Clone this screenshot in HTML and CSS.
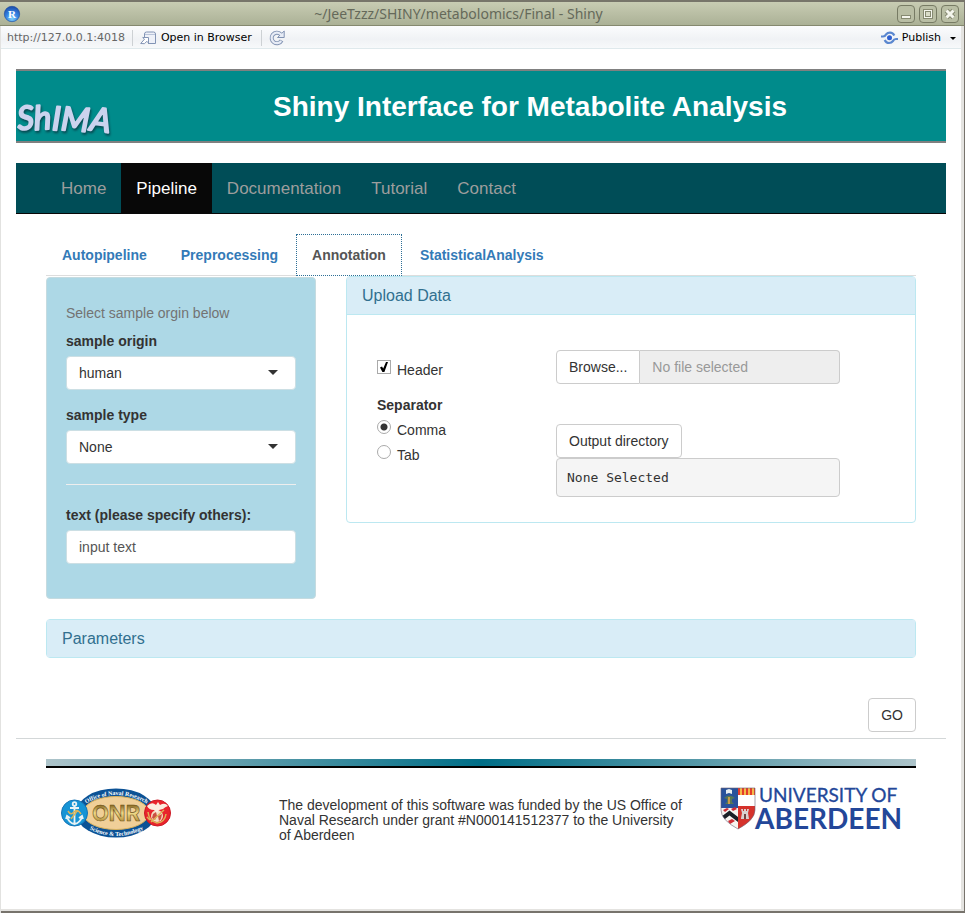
FILE: index.html
```html
<!DOCTYPE html>
<html lang="en">
<head>
<meta charset="utf-8">
<title>~/JeeTzzz/SHINY/metabolomics/Final - Shiny</title>
<link rel="stylesheet" href="styles.css">
</head>
<body>
<div class="window">
  <header class="titlebar">
    <svg class="r-logo" viewBox="0 0 16 16" aria-hidden="true">
      <defs><radialGradient id="ball" cx=".5" cy=".8" r=".8"><stop offset="0" stop-color="#7fd0fa"/><stop offset=".5" stop-color="#3583e2"/><stop offset="1" stop-color="#1c4ba8"/></radialGradient></defs>
      <circle cx="8" cy="8" r="7.7" fill="url(#ball)" stroke="#17489c" stroke-width=".6"/>
      <text x="8" y="12" text-anchor="middle" class="r-letter">R</text>
    </svg>
    <h1 class="window-title">~/JeeTzzz/SHINY/metabolomics/Final - Shiny</h1>
    <div class="window-buttons">
      <button type="button" aria-label="Minimize"><svg viewBox="0 0 16 16"><path class="edge" d="M3 9h10v4H3z"/><path d="M4 10h8v2H4z"/></svg></button>
      <button type="button" aria-label="Maximize"><svg viewBox="0 0 16 16"><path class="edge" d="M3 3h10v10H3z"/><path d="M4 4h8v8H4z"/><path class="edge" d="M5 5h6v6H5z"/><path class="core" d="M6 6h4v4H6z"/></svg></button>
      <button type="button" aria-label="Close"><svg viewBox="0 0 16 16" fill="none"><path class="cross-edge" d="M4.500 4.500l7 7M11.500 4.500l-7 7"/><path class="cross" d="M4.500 4.500l7 7M11.500 4.500l-7 7"/></svg></button>
    </div>
  </header>
  <div class="toolbar">
    <span class="url">http://127.0.0.1:4018</span>
    <button type="button" class="tool tool-open">
      <svg width="17" height="14" viewBox="0 0 17 14" fill="none" stroke="#8294b5"><path d="M4.500 6V3Q4.500 1 6.500 1H13.500Q15.500 1 15.500 3V12.500H8" fill="#eef1f8"/><path d="M5 3.500H15" stroke="#b9c4da"/><path d="M.7 12.500L4.500 8.200 2.700 6.500H8.500V12L6.800 10.300 4.500 12.700Z" fill="#fff"/></svg>
      Open in Browser
    </button>
    <button type="button" class="tool tool-reload" aria-label="Reload">
      <svg width="16" height="16" viewBox="0 0 16 16" fill="none"><path d="M12.600 10.500A5.300 5.300 0 1 1 11.500 4" stroke="#8192b2" stroke-width="4"/><path d="M15.200 1V7.500H8.500Z" fill="#e7ecf6" stroke="#8192b2"/><path d="M12.200 11A5.300 5.300 0 1 1 11.500 4L12.500 5" stroke="#e7ecf6" stroke-width="2.200"/></svg>
    </button>
    <button type="button" class="tool tool-publish">
      <svg width="17" height="14" viewBox="0 0 17 14" fill="none" stroke="#5a87cf" stroke-width="2.200"><path d="M0 5.500H2Q4 5.500 5 3.500 6.500 1.600 9 1.600 12 1.600 13.300 4.500"/><path d="M17 8H15Q13 8 12 10 10.500 12 8 12 5 12 3.700 9"/><circle cx="8.500" cy="6.800" r="2.500" fill="#2e5fd0" stroke="none"/></svg>
      Publish <span class="caret caret-small"></span>
    </button>
  </div>

  <main class="page">
    <div class="banner">
      <svg class="shima" width="100" height="40" viewBox="0 0 100 40" role="img" aria-label="ShIMA">
        <text x="2" y="31" rotate="-4 -4 2 4 8">ShIMA</text>
      </svg>
      <h2>Shiny Interface for Metabolite Analysis</h2>
    </div>

    <nav class="navbar">
      <a href="#home">Home</a>
      <a href="#pipeline" class="active">Pipeline</a>
      <a href="#documentation">Documentation</a>
      <a href="#tutorial">Tutorial</a>
      <a href="#contact">Contact</a>
    </nav>

    <div class="content">
      <nav class="tabs">
        <a href="#autopipeline">Autopipeline</a>
        <a href="#preprocessing">Preprocessing</a>
        <a href="#annotation" class="active">Annotation</a>
        <a href="#statistical">StatisticalAnalysis</a>
      </nav>
      <div class="columns">
        <form class="well">
          <p class="help">Select sample orgin below</p>
          <label for="origin">sample origin</label>
          <div class="select-box"><select id="origin"><option>human</option></select><span class="caret"></span></div>
          <label for="type">sample type</label>
          <div class="select-box"><select id="type"><option>None</option></select><span class="caret"></span></div>
          <hr>
          <label for="others">text (please specify others):</label>
          <input class="text-input" id="others" type="text" value="input text">
        </form>
        <section class="panel">
          <h3>Upload Data</h3>
          <div class="panel-body">
            <div class="options">
              <label class="choice choice-header"><input type="checkbox" checked>Header</label>
              <fieldset>
                <legend>Separator</legend>
                <label class="choice"><input type="radio" name="sep" checked>Comma</label>
                <label class="choice"><input type="radio" name="sep">Tab</label>
              </fieldset>
            </div>
            <div class="files">
              <div class="file-group">
                <button type="button" class="btn">Browse...</button>
                <input type="text" aria-label="Selected file" placeholder="No file selected" readonly>
              </div>
              <button type="button" class="btn">Output directory</button>
              <pre>None Selected</pre>
            </div>
          </div>
        </section>
      </div>
      <section class="panel panel-closed"><h3>Parameters</h3></section>
      <div class="actions"><button type="button" class="btn">GO</button></div>
    </div>

    <footer>
      <div class="bar"></div>
      <div class="credits">
        <svg class="onr" width="110" height="50" viewBox="0 0 110 50" role="img" aria-label="Office of Naval Research Science and Technology">
          <defs>
            <path id="arc-top" d="M21 18Q55 -4 90 18"/>
            <path id="arc-bottom" d="M21 37Q55 59 90 37"/>
            <linearGradient id="gold" x2="0" y2="1"><stop offset=".2" stop-color="#8a6a24"/><stop offset=".5" stop-color="#f0da8a"/><stop offset=".9" stop-color="#a67f2a"/></linearGradient>
          </defs>
          <ellipse cx="55" cy="25" rx="40" ry="24.500" fill="#0c5295"/>
          <ellipse cx="55" cy="25" rx="33" ry="16.500" fill="#f0cf98" stroke="#d8b15d"/>
          <text class="ring-text" text-anchor="middle"><textPath href="#arc-top" startOffset="50%">Office of Naval Research</textPath></text>
          <text class="ring-text" text-anchor="middle"><textPath href="#arc-bottom" startOffset="50%">Science &amp; Technology</textPath></text>
          <text class="onr-text" x="55" y="33" text-anchor="middle">ONR</text>
          <circle cx="13.500" cy="25" r="13" fill="#1694d5" stroke="#1674b5"/>
          <g fill="none" stroke="#e9f2f4" stroke-width="1.800"><circle cx="13.500" cy="16" r="1.800"/><path d="M13.500 18V36M9 20H18M6 29Q8 35 13.500 36 19 35 21 29M5 31l1-3 3 2M22 31l-1-3-3 2"/></g>
          <path d="M7 23q3 5 6 1t7 2M10 31l7-9" fill="none" stroke="#d9b45b" stroke-width="1.500"/>
          <circle cx="96.500" cy="25" r="13" fill="#e9242c" stroke="#cc1824"/>
          <circle cx="96" cy="28" r="6" fill="#f5dfc1"/>
          <path d="M86 18q5-5 9-1l2-3 2 3q5-3 8 1-3 1-5 3l-4 1-2 3-3-3q-5 0-7-4z" fill="#fbecdf"/>
          <path d="M92 26l3-2 1 4-2 4-3-2zM97 28l4-2-1 5-2 2z" fill="#cb5042"/>
          <path d="M87 24q1 9 9 11 8-1 9-9M90 34l13-12M86 29l3 3" fill="none" stroke="#ddb158" stroke-width="1.500"/>
        </svg>
        <p>The development of this software was funded by the US Office of Naval Research under grant #N000141512377 to the University of Aberdeen</p>
        <svg class="aberdeen" width="184" height="44" viewBox="0 0 184 44" role="img" aria-label="University of Aberdeen">
          <defs><clipPath id="shield"><path d="M0 0H34V22Q34 32 17 41 0 32 0 22Z"/></clipPath></defs>
          <g clip-path="url(#shield)">
            <path d="M0 0H17V21H0z" fill="#28529b"/><path d="M17 0H34V21H17z" fill="#fff"/><path d="M0 20H17V44H0z" fill="#f6f3ef"/><path d="M17 18H34V44H17z" fill="#d5322c"/>
            <path d="M17 0H34V7H17z" fill="#e43c2b"/><path d="M19 0h2v7h-2zM23 0h2v7h-2zM27 0h2v7h-2zM31 0h2v7h-2z" fill="#f4ba49"/>
            <path d="M5 2l3-1 3 1v4l-3-1-3 1z" fill="#e7edf0"/><path d="M3 10q5-5 11 0l-3 1v3l2 2H4l2-2v-3z" fill="#557754"/><path d="M7 9h2v7h-2z" fill="#c99a48"/>
            <path d="M0 29L8.500 22.500 17 29V34L8.500 27.500 0 34Z" fill="#191f26"/>
            <path d="M2 22l4-2 2 1-4 3zM10 21l4-2 2 2-4 2zM7 33l4-2 3 2-5 3z" fill="#cf2c35"/>
            <path d="M20 30l1-5-1-4h2v2h1v-2h2v2h1v-2h2l-1 4 1 6h-8z" fill="#d9d0cd"/><path d="M23 31v-5h2v5z" fill="#71433f"/>
          </g>
          <path d="M0 0H34V22Q34 32 17 41 0 32 0 22Z" fill="none" stroke="#6b6177" stroke-width=".6"/>
          <text x="38" y="14" class="univ">UNIVERSITY OF</text>
          <text x="34" y="41" class="aber">ABERDEEN</text>
        </svg>
      </div>
    </footer>
  </main>
</div>
</body>
</html>
```

FILE: styles.css
```css
* { box-sizing: border-box; }
body { margin: 0; font: 14px/20px "Liberation Sans", Arial, sans-serif; color: #333; background: #fff; }
h1, h2, h3, p, pre, fieldset, legend { margin: 0; padding: 0; border: 0; font-weight: normal; }
button, input, select { font: inherit; color: inherit; }
a { text-decoration: none; }
svg { flex: none; overflow: visible; }

.window { display: flex; flex-direction: column; min-height: 100vh; border-left: 1px solid #e2e2e0; box-shadow: inset -1px -2px #77736c, inset -4px -4px #e4e3e0; }

.titlebar { display: grid; grid-template-columns: 16px 1fr auto; align-items: center; height: 26px; margin-left: -1px; padding: 1px 5px 0 4px; border-top: 2px solid #77756a; border-bottom: 1px solid #85896f; border-right: 1px solid #77736c; background: linear-gradient(#c8ccb3, #abb196); }
.r-logo { width: 16px; height: 16px; }
.r-letter { font: bold 11px "Liberation Serif", serif; fill: #fff; }
.window-title { font: 14px/20px "Noto Sans", sans-serif; color: #65695a; text-align: center; }
.window-buttons { display: flex; justify-content: flex-end; gap: 4px; }
.window-buttons button { width: 18px; height: 18px; padding: 0; border: 1px solid #777b64; border-radius: 4px; background: #b9bea4; }
.window-buttons svg { display: block; width: 16px; height: 16px; fill: #f4f5ec; }
.window-buttons .edge { fill: #868a71; }
.window-buttons .core { fill: #d9dcc8; }
.cross-edge { stroke: #868a71; stroke-width: 5; }
.cross { stroke: #f4f5ec; stroke-width: 3; }

.toolbar { display: flex; align-items: center; height: 23px; margin-right: 4px; padding: 1px 5px 0 6px; border-bottom: 1px solid #dfe9ec; background: linear-gradient(#fbfcfd, #f0f2f5 60%, #f7f9fa); font: 11px/14px "DejaVu Sans", sans-serif; color: #000; }
.url { color: #666; }
.tool { display: flex; align-items: center; gap: 4px; height: 16px; padding: 1px 0 0; border: 0; background: none; }
.tool-open, .tool-reload { margin-left: 7px; padding-left: 7px; border-left: 1px solid #cdd1d4; }
.tool-reload { margin-left: 9px; }
.tool-publish { margin-left: auto; }

.caret { width: 0; height: 0; border: solid transparent; border-width: 5px 5px 0; border-top-color: #333; }
.caret-small { margin-left: 5px; border-width: 3px 3px 0; border-top-color: #000; }

.page { margin-right: 4px; padding: 20px 15px 0; }
.banner { display: grid; grid-template-columns: 100px 1fr; height: 74px; border: solid #808080; border-width: 2px 0; background: #008b8b; }
.banner h2 { font-size: 28px; line-height: 32px; font-weight: bold; color: #fff; text-align: center; padding: 20px 2px 0 0; }
.shima { align-self: end; margin-bottom: 2px; filter: drop-shadow(1px 2px 1px #064a52); }
.shima text { font: italic 33px Lato, sans-serif; fill: #cbd3ee; stroke: #cbd3ee; stroke-width: 2; stroke-linejoin: round; }

.navbar { display: flex; min-height: 51px; margin-top: 20px; padding-left: 30px; border-bottom: 1px solid #080808; background: #004d57; font-size: 17px; }
.navbar a { padding: 16px 15px 14px; color: #9d9d9d; }
.navbar .active { background: #080808; color: #fff; }

.content { padding: 20px 30px 6px; border-bottom: 1px solid #d3d7d8; }
.tabs { display: flex; gap: 2px; border-bottom: 1px solid #ddd; font-weight: bold; }
.tabs a { padding: 10px 15px; border: 1px solid transparent; margin-bottom: -1px; color: #337ab7; }
.tabs .active { border: 1px dotted #2d6f96; background: #fff; color: #555; }

.columns { display: grid; grid-template-columns: 270fr 570fr; gap: 30px; align-items: start; }
.well { margin-top: 1px; min-height: 322px; padding: 25px 19px 34px; border: 1px solid #c5dbe0; border-radius: 4px; background: #add8e6; }
.help { margin-bottom: 8px; color: #737373; }
.well label { display: block; margin-bottom: 5px; font-weight: bold; }
.select-box { position: relative; margin-bottom: 15px; }
.select-box select, .text-input { display: block; width: 100%; height: 34px; padding: 6px 12px; border: 1px solid #ccdfe4; border-radius: 4px; background: #fff; }
.select-box select { appearance: none; }
.select-box .caret { position: absolute; right: 18px; top: 14px; pointer-events: none; }
.text-input { color: #555; }
hr { margin: 20px 0; border: 0; border-top: 1px solid #eee; }

.panel { border: 1px solid #bce8f1; border-radius: 4px; background: #fff; }
.panel h3 { padding: 10px 15px; border-bottom: 1px solid #bce8f1; background: #d9edf7; color: #31708f; font-size: 16px; line-height: 17px; }
.panel-body { display: grid; grid-template-columns: minmax(0, 179fr) minmax(0, 329fr); padding: 35px 30px 25px; }
.choice { display: flex; align-items: flex-start; gap: 6px; margin-bottom: 5px; }
.choice input { width: 14px; height: 14px; margin: 0; appearance: none; border: 1px solid #aaa; background: #fff; }
.choice input[type="checkbox"]:checked::after { content: ""; display: block; width: 8px; height: 10px; margin: 1px 2px; background: #000; clip-path: polygon(0 55%, 25% 45%, 40% 65%, 75% 0, 100% 0, 55% 100%, 30% 100%); }
.choice input[type="radio"] { border-radius: 50%; }
.choice input[type="radio"]:checked { background: radial-gradient(circle, #333 3px, #fff 4px); }
.choice-header { margin: 10px 0 15px; }
legend { margin-bottom: 5px; font-weight: bold; }
.files { padding-right: 45px; }
.btn { height: 34px; padding: 6px 12px; border: 1px solid #ccc; border-radius: 4px; background: #fff; }
.file-group { display: flex; margin-bottom: 40px; }
.file-group .btn { border-radius: 4px 0 0 4px; }
.file-group input { flex: 1; min-width: 0; height: 34px; padding: 6px 12px; border: 1px solid #ccc; border-left: 0; border-radius: 0 4px 4px 0; background: #eee; }
.file-group input::placeholder { color: #999; opacity: 1; }
.files > .btn { display: block; }
pre { padding: 9px 10px; border: 1px solid #ccc; border-radius: 4px; background: #f5f5f5; font: 13px/19px "DejaVu Sans Mono", monospace; }
.panel-closed { margin-top: 20px; }
.panel-closed h3 { border-bottom: 0; }
.actions { display: flex; justify-content: flex-end; margin-top: 40px; }

footer { padding: 20px 30px 40px; }
.bar { height: 9px; border-bottom: 2px solid #000; background: linear-gradient(90deg, #adc4ca, #006e87 50%, #adc4ca); }
.credits { display: grid; grid-template-columns: 218px 1fr auto; align-items: start; padding: 20px 11px 0 15px; }
.credits p { max-width: 405px; padding-top: 10px; line-height: 15px; }
.ring-text { font: bold 6px "Liberation Serif", serif; fill: #fff; }
.onr-text { font: bold 22px Inter, sans-serif; fill: url(#gold); stroke: #6d521b; stroke-width: .6; }
.univ { font: 19px Lato, sans-serif; fill: #234799; stroke: #234799; stroke-width: .3; }
.aber { font: bold 28px Lato, sans-serif; fill: #234799; }
```
